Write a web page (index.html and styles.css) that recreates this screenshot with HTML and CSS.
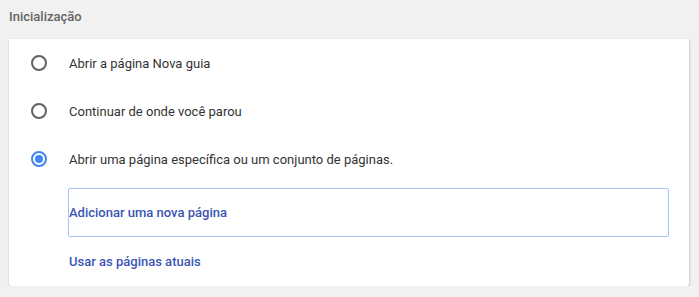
FILE: index.html
```html
<!DOCTYPE html>
<html>
<head>
  <title>Inicialização</title>
  <link rel="stylesheet" href="styles.css">
</head>
<body>
  <h2 class="section-title">Inicialização</h2>
  <div class="card">
    <label class="radio-row">
      <span class="radio"></span>
      <span>Abrir a página Nova guia</span>
    </label>
    <label class="radio-row">
      <span class="radio"></span>
      <span>Continuar de onde você parou</span>
    </label>
    <label class="radio-row">
      <span class="radio checked"></span>
      <span>Abrir uma página específica ou um conjunto de páginas.</span>
    </label>
    <div class="pages">
      <div class="add-page">Adicionar uma nova página</div>
      <div class="use-current">Usar as páginas atuais</div>
    </div>
  </div>
</body>
</html>
```

FILE: styles.css
```css
body {
  margin: 0;
  background-color: #f1f1f1;
  font-family: Roboto, "Liberation Sans", Arial, sans-serif;
  font-size: 13px;
  color: #333333;
}

.section-title {
  margin: 0;
  padding: 9px 0 0 9px;
  height: 39px;
  box-sizing: border-box;
  font-size: 13px;
  font-weight: 500;
  color: #646464;
}

.card {
  margin: 0 10px 0 9px;
  background-color: #ffffff;
  border-radius: 2px;
  box-shadow: 0 1px 2px rgba(0, 0, 0, 0.2), 1px 1px 3px rgba(0, 0, 0, 0.1);
  height: 247px;
  box-sizing: border-box;
}

.radio-row {
  display: flex;
  align-items: center;
  height: 48px;
  padding-left: 22px;
}

.radio {
  width: 16px;
  height: 16px;
  box-sizing: border-box;
  border: 2px solid #5f6368;
  border-radius: 50%;
  margin-right: 22px;
  position: relative;
}

.radio.checked {
  border-color: #4285f4;
}

.radio.checked::after {
  content: "";
  position: absolute;
  left: 2px;
  top: 2px;
  width: 8px;
  height: 8px;
  border-radius: 50%;
  background-color: #4285f4;
}

.pages {
  padding: 5px 20px 0 59px;
}

.add-page {
  height: 49px;
  box-sizing: border-box;
  border: 1px solid #a6c3f4;
  border-radius: 2px;
  display: flex;
  align-items: center;
  font-weight: 500;
  color: #3b55b5;
}

.use-current {
  height: 48px;
  display: flex;
  align-items: center;
  padding-left: 1px;
  font-weight: 500;
  color: #3b55b5;
}
```
